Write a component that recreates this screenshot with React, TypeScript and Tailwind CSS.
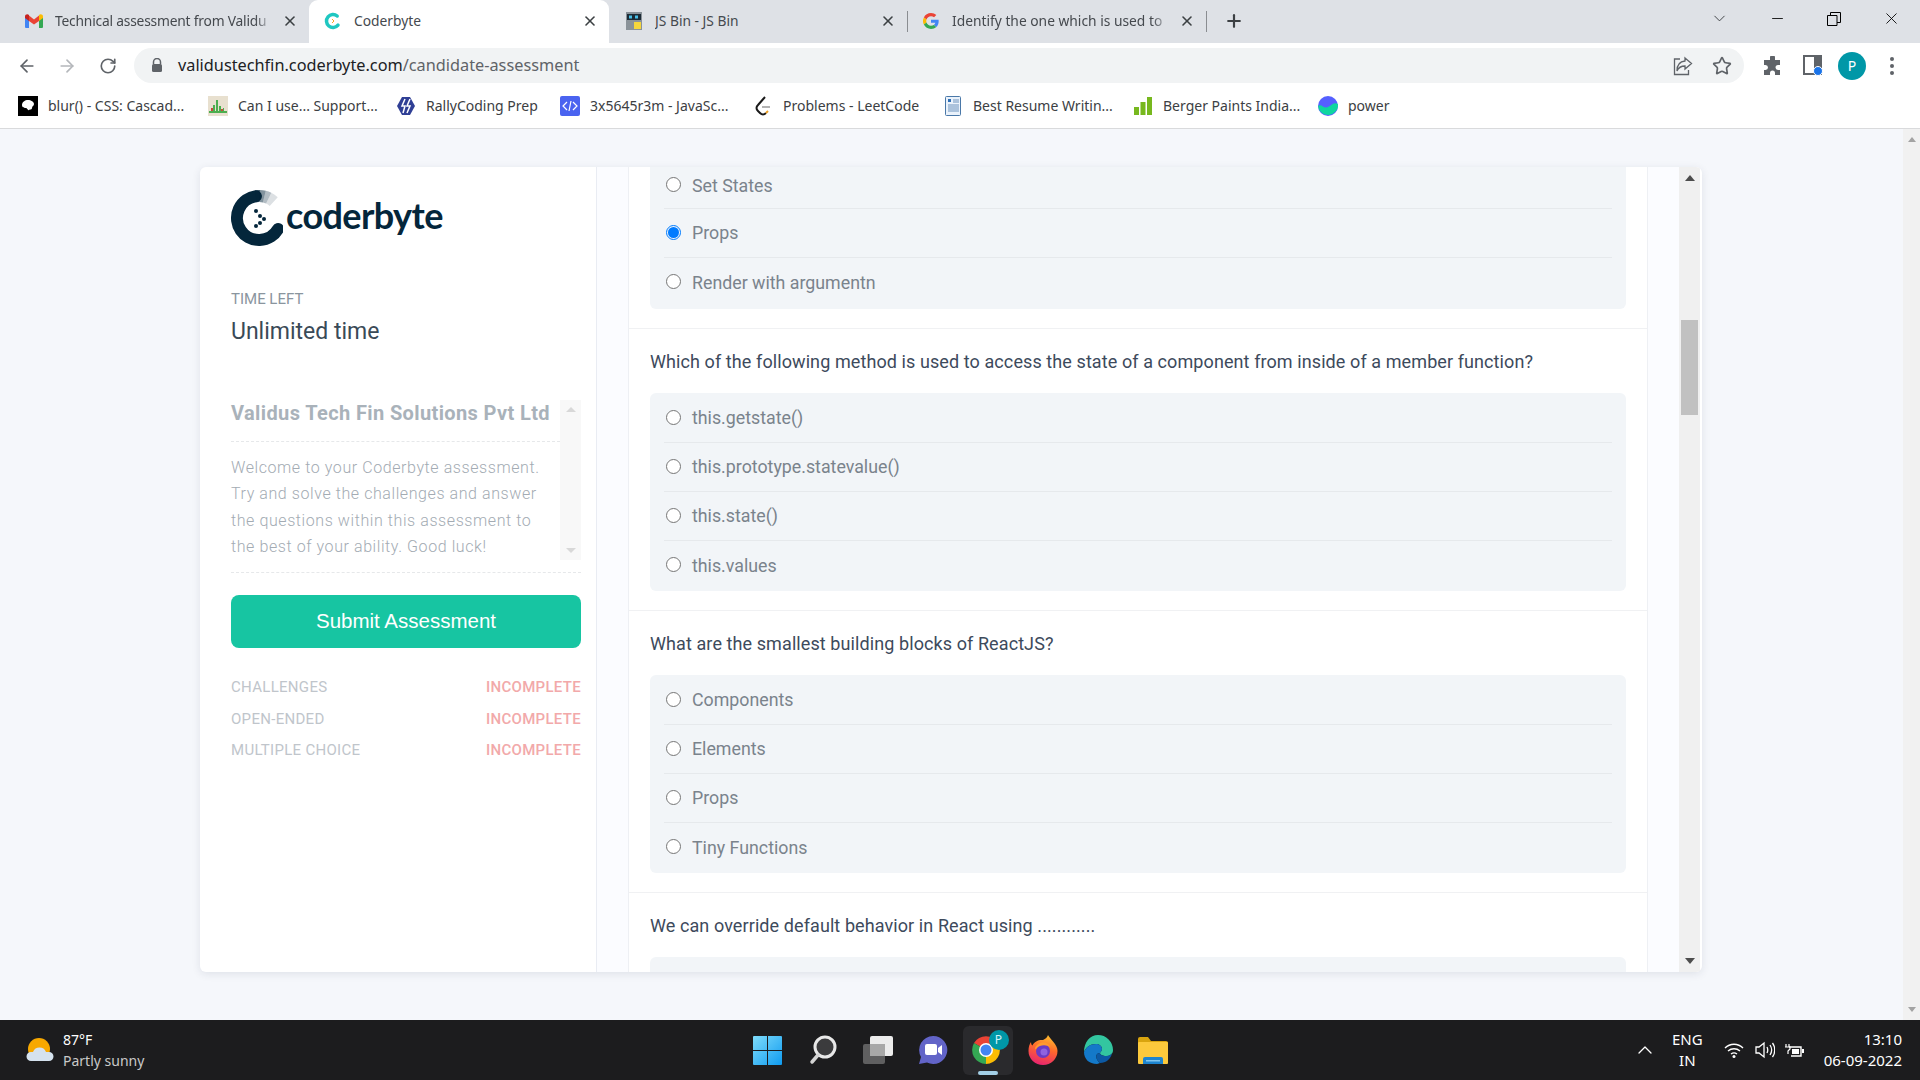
import { ArrowLeft, ArrowRight, ChevronDown, ChevronUp, Minus, Plus, RotateCw, Star, X } from "lucide-react";
import type { ReactNode } from "react";

const UI_FONT = "font-['Noto_Sans','Open_Sans',sans-serif]";

// arc path helper for the logo ring
const arc = (cx: number, cy: number, r: number, from: number, to: number) => {
  const rad = (d: number) => (d * Math.PI) / 180;
  const large = Math.abs(to - from) > 180 ? 1 : 0;
  const sweep = to > from ? 1 : 0;
  return `M${cx + r * Math.cos(rad(from))} ${cy + r * Math.sin(rad(from))}A${r} ${r} 0 ${large} ${sweep} ${cx + r * Math.cos(rad(to))} ${cy + r * Math.sin(rad(to))}`;
};

const CoderbyteMark = () => (
  <svg width="52" height="58" viewBox="0 0 52 58" className="mt-[2px] shrink-0">
    <path d={arc(28, 28, 22, 30, 262)} fill="none" stroke="#04263b" strokeWidth="12" strokeLinecap="round" />
    <path d={arc(28, 28, 22, 262, 272)} fill="none" stroke="#04263b" strokeOpacity="0.75" strokeWidth="12" />
    <path d={arc(28, 28, 22, 272, 284)} fill="none" stroke="#04263b" strokeOpacity="0.5" strokeWidth="12" />
    <path d={arc(28, 28, 22, 284, 296)} fill="none" stroke="#04263b" strokeOpacity="0.3" strokeWidth="12" />
    <path d={arc(28, 28, 22, 296, 312)} fill="none" stroke="#04263b" strokeOpacity="0.14" strokeWidth="12" />
    {[[25, 21], [29, 26], [33, 29], [29, 33], [25, 36]].map(([x, y]) => (
      <circle key={`${x}-${y}`} cx={x} cy={y} r="2" fill="#04263b" />
    ))}
  </svg>
);

const GmailIcon = () => (
  <svg width="18" height="14" viewBox="0 0 18 14">
    <path d="M0 2.5V13a1 1 0 0 0 1 1h3V6z" fill="#4285f4" />
    <path d="M18 2.5V13a1 1 0 0 1-1 1h-3V6z" fill="#34a853" />
    <path d="M4 7V1.500L9 5.500 14 1.500V7L9 10.500z" fill="#ea4335" />
    <path d="M0 2.500C0 .5 2.500-.5 4 1v6L0 4z" fill="#c5221f" />
    <path d="M18 2.500C18 .5 15.500-.5 14 1v6l4-3z" fill="#fbbc04" />
  </svg>
);

const GoogleIcon = () => (
  <svg width="16" height="16" viewBox="0 0 48 48">
    <path fill="#EA4335" d="M24 9.500c3.500 0 6.700 1.300 9.100 3.500l6.800-6.800C35.800 2.400 30.200 0 24 0 14.600 0 6.500 5.400 2.600 13.200l7.900 6.200C12.400 13.700 17.700 9.500 24 9.500z" />
    <path fill="#4285F4" d="M47 24.500c0-1.600-.1-3.100-.4-4.500H24v9h13c-.6 3-2.300 5.500-4.800 7.200l7.700 6C44.400 38 47 31.800 47 24.500z" />
    <path fill="#FBBC05" d="M10.500 28.600A14.500 14.500 0 0 1 10.500 19.400l-7.900-6.200a24 24 0 0 0 0 21.600z" />
    <path fill="#34A853" d="M24 48c6.500 0 11.900-2.100 15.900-5.800l-7.700-6c-2.100 1.400-4.900 2.300-8.200 2.300-6.300 0-11.600-4.200-13.500-9.900l-7.900 6.200C6.500 42.600 14.600 48 24 48z" />
  </svg>
);

const CoderbyteFavicon = () => (
  <svg width="18" height="18" viewBox="0 0 18 18">
    <path d={arc(9, 9, 6.500, 40, 310)} fill="none" stroke="#1fc7c1" strokeWidth="3.500" strokeLinecap="round" />
    <path d="M8 7l2 2-2 2" fill="none" stroke="#f5a623" strokeWidth="1" />
  </svg>
);

const JsBinIcon = () => (
  <svg width="16" height="18" viewBox="0 0 16 18">
    <rect x="0" y="0" width="16" height="18" fill="#8a9299" />
    <rect x="1" y="2" width="14" height="6" fill="#1d2b36" />
    <rect x="3" y="3.500" width="3" height="3" fill="#49c0e8" />
    <rect x="9" y="3.500" width="3" height="3" fill="#49c0e8" />
    <rect x="8" y="10" width="7" height="7" fill="#f5d63d" />
  </svg>
);

const bookmarkIcons: Record<string, ReactNode> = {
  blur: (
    <svg width="20" height="20" viewBox="0 0 20 20">
      <rect width="20" height="20" fill="#000" />
      <path d="M4 9c0-3 3-5 6-5s6 2 6 4-2 2-2 4-2 1-3 2-2-2-3-2-4 0-4-3z" fill="#fff" />
    </svg>
  ),
  caniuse: (
    <svg width="20" height="20" viewBox="0 0 20 20">
      <rect width="20" height="20" fill="#e8e0cf" />
      <path d="M1 15h18v2H1zM5 9h2v6H5zM8 4h2v11H8zM11 10h2v5h-2zM15 12h1v3h-1z" fill="#4cae4f" />
      <path d="M3 12h2v3H3zM13 13h2v2h-2z" fill="#c9483b" />
    </svg>
  ),
  rally: (
    <svg width="20" height="20" viewBox="0 0 20 20">
      <path d="M6 1h8l5 9-5 9H6l-5-9z" fill="#2f3f95" />
      <path d="M9 3L6 10h3l-2 7M14 3l-3 7h3l-3 7" fill="none" stroke="#fff" strokeWidth="1.500" />
    </svg>
  ),
  js: (
    <svg width="20" height="20" viewBox="0 0 20 20">
      <rect width="20" height="20" rx="2" fill="#4a63f0" />
      <path d="M7 6l-4 4 4 4M13 6l4 4-4 4M11 5l-2 10" fill="none" stroke="#fff" strokeWidth="1.200" />
    </svg>
  ),
  leet: (
    <svg width="18" height="20" viewBox="0 0 18 20">
      <path d="M11 1L4 9c-2 2-2 4 0 6l2 2c2 2 4 2 6 0" fill="none" stroke="#1a1a1a" strokeWidth="2" />
      <path d="M12 17l2-2" stroke="#f0a020" strokeWidth="2" />
      <path d="M8 11h8" stroke="#b3b3b3" strokeWidth="2" />
    </svg>
  ),
  resume: (
    <svg width="16" height="20" viewBox="0 0 16 20">
      <rect x=".5" y=".5" width="15" height="19" rx="1" fill="#eaf2fb" stroke="#4a78a8" />
      <rect x="3" y="3" width="3" height="3" fill="#2f6fb5" />
      <path d="M8 4h6M8 6h6M3 9h11M3 11h11M3 13h11M3 15h11" stroke="#6c93bd" />
    </svg>
  ),
  berger: (
    <svg width="20" height="20" viewBox="0 0 20 20">
      <rect x="1" y="11" width="5" height="8" fill="#77b81e" />
      <rect x="7.500" y="6" width="5" height="13" fill="#77b81e" />
      <rect x="14" y="1" width="5" height="18" fill="#77b81e" />
    </svg>
  ),
  power: (
    <svg width="20" height="20" viewBox="0 0 20 20">
      <circle cx="10" cy="10" r="10" fill="#5560ff" />
      <path d="M0 10c3-3 6 3 10 1s6-5 10-3a10 10 0 0 1-20 2z" fill="#0fd6a0" />
    </svg>
  ),
};

interface TabProps {
  title: string;
  icon: ReactNode;
  width: string;
  pl: string;
  active?: boolean;
  fade?: boolean;
  tight?: boolean;
}

const Tab = ({ title, icon, width, pl, active, fade, tight }: TabProps) => (
  <div className={`flex h-full shrink-0 items-center gap-[12px] pr-[11px] pb-[1px] ${width} ${pl} ${active ? "rounded-t-[9px] bg-white" : ""}`}>
    <span className="flex w-[18px] shrink-0 justify-center">{icon}</span>
    <span
      className={`min-w-0 flex-1 overflow-hidden text-[13.800px] whitespace-nowrap text-[#45494e] ${tight ? "tracking-[-0.2px]" : ""} ${fade ? "[mask-image:linear-gradient(to_right,black_92%,transparent)]" : ""}`}
    >
      {title}
    </span>
    <X size={16} strokeWidth={2.4} className="-ml-[3px] shrink-0 text-[#3c4043]" />
  </div>
);

const TabStrip = () => (
  <div className={`flex h-[43px] items-stretch bg-[#dee1e6] ${UI_FONT}`}>
    <Tab title="Technical assessment from Validu" icon={<GmailIcon />} width="w-[309px]" pl="pl-[25px]" fade tight />
    <Tab title="Coderbyte" icon={<CoderbyteFavicon />} width="w-[300px]" pl="pl-[15px]" active />
    <Tab title="JS Bin - JS Bin" icon={<JsBinIcon />} width="w-[298px]" pl="pl-[16px]" />
    <div className="my-[11px] w-px bg-[#8a8d91]" />
    <Tab title="Identify the one which is used to" icon={<GoogleIcon />} width="w-[298px]" pl="pl-[14px]" fade />
    <div className="my-[11px] w-px bg-[#8a8d91]" />
    <Plus size={20} strokeWidth={2.6} className="mt-[11px] ml-[17px] text-[#3c4043]" />
    <div className="mb-[6px] ml-auto flex items-center">
      <ChevronDown size={19} strokeWidth={1.2} className="text-[#3c4043]" />
      <Minus size={17} strokeWidth={1.2} className="ml-[40px] text-black" />
      <svg width="14" height="14" viewBox="0 0 14 14" className="ml-[41px]">
        <path d="M.5 3.500h9.500v10H.5zM3.500 3.500V.5h10v10H10" fill="none" stroke="#000" />
      </svg>
      <X size={19} strokeWidth={1.1} className="mr-[19px] ml-[41px] text-black" />
    </div>
  </div>
);

const Toolbar = () => (
  <div className={`flex h-[40px] items-center bg-white pt-[5px] ${UI_FONT}`}>
    <ArrowLeft size={20} strokeWidth={2} className="ml-[17px] text-[#5f6368]" />
    <ArrowRight size={20} strokeWidth={2} className="ml-[20px] text-[#b4b7bb]" />
    <RotateCw size={18} strokeWidth={2.2} className="ml-[22px] text-[#5f6368]" />
    <div className="ml-[17px] flex h-[35px] w-[1610px] items-center rounded-full bg-[#f1f3f4]">
      <svg width="12" height="15" viewBox="0 0 12 15" className="ml-[17px]">
        <path d="M2.500 6V4a3.500 3.500 0 0 1 7 0v2" fill="none" stroke="#5f6368" strokeWidth="1.500" />
        <rect x="1" y="6" width="10" height="8" rx="1.500" fill="#5f6368" />
      </svg>
      <span className="ml-[15px] text-[16.300px] text-[#202124]">
        validustechfin.coderbyte.com<span className="text-[#5f6368]">/candidate-assessment</span>
      </span>
      <svg width="20" height="20" viewBox="0 0 20 20" className="ml-auto">
        <path d="M7 3H1.500v15.500h14V14" fill="none" stroke="#5f6368" strokeWidth="1.300" />
        <path d="M12 2l6.500 5.500-6.500 5.500V10C8 10 5.500 11.500 4 15c0-6 3-9.500 8-10z" fill="none" stroke="#5f6368" strokeWidth="1.300" />
      </svg>
      <Star size={20} strokeWidth={2} className="mr-[12px] ml-[19px] text-[#5f6368]" />
    </div>
    <svg width="20" height="20" viewBox="0 0 20 20" className="ml-[18px]">
      <path d="M8 1.500a2.500 2.500 0 0 1 5 0V4h5v5h-2a2.500 2.500 0 0 0 0 5h2v5h-5v-2a2.500 2.500 0 0 0-5 0v2H2v-5h1.500a2.500 2.500 0 0 0 0-5H2V4h6z" fill="#5f6368" />
    </svg>
    <svg width="20" height="22" viewBox="0 0 20 22" className="ml-[21px]">
      <path d="M1 1h17v18H1z" fill="none" stroke="#5f6368" strokeWidth="2" />
      <rect x="11" y="1" width="7" height="18" fill="#5f6368" />
      <circle cx="15" cy="16" r="4.500" fill="#1a73e8" stroke="#fff" strokeWidth="1" />
    </svg>
    <div className="ml-[15px] flex h-[28px] w-[28px] items-center justify-center rounded-full bg-[#0097a7] text-[14px] text-white">P</div>
    <div className="ml-[24px] flex flex-col gap-[3px]">
      <span className="h-[4px] w-[4px] rounded-full bg-[#5f6368]" />
      <span className="h-[4px] w-[4px] rounded-full bg-[#5f6368]" />
      <span className="h-[4px] w-[4px] rounded-full bg-[#5f6368]" />
    </div>
  </div>
);

const bookmarks = [
  { label: "blur() - CSS: Cascad...", icon: "blur", width: "w-[190px]" },
  { label: "Can I use... Support...", icon: "caniuse", width: "w-[188px]" },
  { label: "RallyCoding Prep", icon: "rally", width: "w-[164px]" },
  { label: "3x5645r3m - JavaSc...", icon: "js", width: "w-[193px]" },
  { label: "Problems - LeetCode", icon: "leet", width: "w-[190px]" },
  { label: "Best Resume Writin...", icon: "resume", width: "w-[190px]" },
  { label: "Berger Paints India...", icon: "berger", width: "w-[185px]" },
  { label: "power", icon: "power", width: "w-[80px]" },
];

const BookmarksBar = () => (
  <div className={`flex h-[46px] items-center border-b border-[#d9dadc] bg-white pl-[18px] ${UI_FONT}`}>
    {bookmarks.map((b) => (
      <div key={b.label} className={`flex shrink-0 items-center gap-[10px] ${b.width}`}>
        <span className="flex w-[20px] justify-center">{bookmarkIcons[b.icon]}</span>
        <span className="text-[14px] whitespace-nowrap text-[#3c4043]">{b.label}</span>
      </div>
    ))}
  </div>
);

const Sidebar = () => (
  <aside className="flex w-[397px] shrink-0 flex-col border-r border-[#e9ecf3] pr-[15px] pl-[31px] font-['Roboto',sans-serif]">
    <div className="mt-[23px] flex h-[56px] items-center">
      <CoderbyteMark />
      <span className="-mt-[6px] ml-[3px] font-['Lato',sans-serif] text-[36px] font-bold tracking-[-0.6px] text-[#04263b]">coderbyte</span>
    </div>
    <p className="mt-[43px] text-[15px] leading-[20px] text-[#8a959e]">TIME LEFT</p>
    <p className="mt-[10px] text-[23px] leading-[26px] text-[#3a4a57]">Unlimited time</p>

    <div className="mt-[55px] flex h-[173px] flex-col border-b border-dashed border-[#e6e8ea]">
      <div className="flex h-[160px]">
        <div className="min-w-0 flex-1">
          <h2 className="flex h-[42px] items-center border-b border-dashed border-[#e6e8ea] pb-[15px] text-[20px] leading-[26px] font-bold tracking-[0.38px] whitespace-nowrap text-[#a9b2ba]">
            Validus Tech Fin Solutions Pvt Ltd
          </h2>
          <p className="mt-[13px] pr-[12px] text-[16px] leading-[26.300px] font-light tracking-[0.58px] text-[#a3abb3]">
            Welcome to your Coderbyte assessment. Try and solve the challenges and answer the questions within this
            assessment to the best of your ability. Good luck!
          </p>
        </div>
        <div className="flex w-[21px] shrink-0 flex-col items-center justify-between bg-[#f8f8f8] py-[7px]">
          <span className="h-0 w-0 border-x-[5px] border-b-[5px] border-x-transparent border-b-[#d8d8d8]" />
          <span className="h-0 w-0 border-x-[5px] border-t-[5px] border-x-transparent border-t-[#d8d8d8]" />
        </div>
      </div>
    </div>

    <button className="mt-[22px] h-[53px] w-full rounded-[8px] bg-[#17c5a2] font-['Liberation_Sans',sans-serif] text-[20.500px] text-white">
      Submit Assessment
    </button>

    <div className="mt-[29px] flex flex-col gap-[11.500px] text-[15px] leading-[20px] tracking-[0.3px]">
      {["CHALLENGES", "OPEN-ENDED", "MULTIPLE CHOICE"].map((label) => (
        <div key={label} className="flex justify-between">
          <span className="text-[#c0c5cb]">{label}</span>
          <span className="font-medium text-[#f2a9aa]">INCOMPLETE</span>
        </div>
      ))}
    </div>
  </aside>
);

const Radio = ({ checked }: { checked?: boolean }) =>
  checked ? (
    <span className="flex h-[15px] w-[15px] shrink-0 items-center justify-center rounded-full border border-[#007bff]">
      <span className="h-[11px] w-[11px] rounded-full bg-[#007bff]" />
    </span>
  ) : (
    <span className="h-[15px] w-[15px] shrink-0 rounded-full border-[1.500px] border-[#767676] bg-white" />
  );

const OptionsPanel = ({ options, selected, clippedTop }: { options: string[]; selected?: number; clippedTop?: boolean }) => (
  <div className={`rounded-b-[6px] bg-[#f2f5f8] px-[14px] ${clippedTop ? "pb-[2px]" : "rounded-t-[6px] py-[1px]"}`}>
    {options.map((o, i) => (
      <div
        key={i}
        className={`flex items-center gap-[11px] pl-[2px] ${i < options.length - 1 ? "border-b border-[#e6e9ec]" : ""} ${clippedTop && i === 0 ? "h-[42px] pb-[4px]" : "h-[49px]"}`}
      >
        <span className="-mt-[2px] flex"><Radio checked={i === selected} /></span>
        <span className="pt-[1px] text-[17.800px] text-[#7a838c]">{o}</span>
      </div>
    ))}
  </div>
);

const Question = ({ text, children }: { text?: string; children: ReactNode }) => (
  <section className="border-b border-[#f0f1f3] px-[21px] pb-[19px]">
    {text && <p className="flex h-[64px] items-center font-['Roboto',sans-serif] text-[18px] tracking-[0.09px] text-[#3d4a5c]">{text}</p>}
    {children}
  </section>
);

const Questions = () => (
  <div className="w-[1018px] shrink-0 overflow-hidden font-['Roboto',sans-serif]">
    <Question>
      <OptionsPanel clippedTop options={["Set States", "Props", "Render with argumentn"]} selected={1} />
    </Question>
    <Question text="Which of the following method is used to access the state of a component from inside of a member function?">
      <OptionsPanel options={["this.getstate()", "this.prototype.statevalue()", "this.state()", "this.values"]} />
    </Question>
    <Question text="What are the smallest building blocks of ReactJS?">
      <OptionsPanel options={["Components", "Elements", "Props", "Tiny Functions"]} />
    </Question>
    <Question text="We can override default behavior in React using ............">
      <OptionsPanel options={["", ""]} />
    </Question>
  </div>
);

const CardScrollbar = () => (
  <div className="flex w-[21px] shrink-0 flex-col bg-[#f0f0f0]">
    <div className="flex h-[14px] items-end justify-center">
      <span className="h-0 w-0 border-x-[5px] border-b-[6px] border-x-transparent border-b-[#4d4d4d]" />
    </div>
    <div className="mx-[2px] mt-[139px] h-[95px] bg-[#c1c1c1]" />
    <div className="mt-auto mb-[8px] flex justify-center">
      <span className="h-0 w-0 border-x-[5px] border-t-[6px] border-x-transparent border-t-[#4d4d4d]" />
    </div>
  </div>
);

const Card = () => (
  <div className="mt-[38px] ml-[200px] flex h-[805px] w-[1502px] overflow-hidden rounded-[6px] bg-white shadow-[0_2px_8px_rgba(30,40,70,0.1)]">
    <Sidebar />
    <div className="w-[32px] shrink-0 border-r border-[#eef0f4] bg-[#fbfcff]" />
    <Questions />
    <div className="w-[32px] shrink-0 border-l border-[#eef0f4] bg-[#fbfcff]" />
    <CardScrollbar />
  </div>
);

const WindowsLogo = () => (
  <svg width="29" height="29" viewBox="0 0 29 29">
    <defs>
      <linearGradient id="win" x1="0" y1="0" x2="1" y2="1">
        <stop offset="0" stopColor="#7fdcfb" />
        <stop offset="1" stopColor="#0f9bf0" />
      </linearGradient>
    </defs>
    <path d="M0 1a1 1 0 0 1 1-1h13v14H0zM15 0h13a1 1 0 0 1 1 1v13H15zM0 15h14v14H1a1 1 0 0 1-1-1zM15 15h14v13a1 1 0 0 1-1 1H15z" fill="url(#win)" />
  </svg>
);

const SearchIcon = () => (
  <svg width="28" height="30" viewBox="0 0 28 30">
    <circle cx="16" cy="12" r="10" fill="#3b3b3d" stroke="#e8e8e8" strokeWidth="3" />
    <path d="M9 20l-6 7" stroke="#d4d4d4" strokeWidth="3.500" strokeLinecap="round" />
  </svg>
);

const TaskViewIcon = () => (
  <svg width="30" height="28" viewBox="0 0 30 28">
    <rect x="0" y="8" width="22" height="20" rx="2" fill="#5f5f60" />
    <rect x="7" y="0" width="23" height="20" rx="2" fill="#ececec" />
    <rect x="7" y="8" width="15" height="12" fill="#a8a8a8" />
  </svg>
);

const ChatIcon = () => (
  <svg width="30" height="30" viewBox="0 0 30 30">
    <path d="M15 1a14 14 0 1 1-6 26.500L1 29l2-7A14 14 0 0 1 15 1z" fill="#6264c8" />
    <rect x="7" y="9" width="12" height="11" rx="2" fill="#fff" />
    <path d="M20 13l4-3v10l-4-3z" fill="#fff" />
  </svg>
);

const ChromeIcon = () => (
  <span className="relative flex h-[49px] w-[50px] items-center justify-center rounded-[6px] bg-[#2a2a2d]">
    <svg width="28" height="28" viewBox="0 0 28 28" className="-mt-[1px] -ml-[3px]">
      <path d="M14 14L2 7A14 14 0 0 1 26 7z" fill="#ea4335" />
      <path d="M14 14L26 7a14 14 0 0 1-12 21z" fill="#fbbc04" />
      <path d="M14 14l0 14A14 14 0 0 1 2 7z" fill="#34a853" />
      <circle cx="14" cy="14" r="7" fill="#fff" />
      <circle cx="14" cy="14" r="5.500" fill="#4285f4" />
    </svg>
    <span className="absolute top-[4px] right-[4px] flex h-[20px] w-[20px] items-center justify-center rounded-full bg-[#0097a7] text-[12px] text-[#d5f3f7]">P</span>
    <span className="absolute bottom-0 left-[15px] h-[4px] w-[20px] rounded-full bg-[#a3cfe6]" />
  </span>
);

const FirefoxIcon = () => (
  <svg width="30" height="30" viewBox="0 0 30 30">
    <defs>
      <linearGradient id="fx" x1="0.7" y1="0" x2="0.4" y2="1">
        <stop offset="0" stopColor="#ffc12e" />
        <stop offset="0.45" stopColor="#ff6a2b" />
        <stop offset="1" stopColor="#e8246f" />
      </linearGradient>
    </defs>
    <path d="M20 0c1 2 3 4 5 6.500 3 3.500 4.500 6.500 4.500 9.500a14.500 14 0 0 1-29 0C.5 12 1.500 9 3 7c0 1.500.5 3 1.500 3.500C6 6.500 11 4.500 15 5c2.500-1 4.500-3 5-5z" fill="url(#fx)" />
    <circle cx="15" cy="16" r="7" fill="#6a3bc4" />
    <circle cx="16" cy="17" r="3.500" fill="#8f63e0" />
    <path d="M7 13c2-5 9-7 13-4 1 .8 2 2 2.500 3.500C19 9.500 12 9.500 8.500 13.500c-.5 1-1 1.500-1.500-.5z" fill="#ff9a2e" />
  </svg>
);

const EdgeIcon = () => (
  <svg width="30" height="30" viewBox="0 0 30 30">
    <path d="M15 0a15 15 0 0 1 15 15c0 4-3 6-7 6-3 0-6-1-6-3 0-1 2-2 2-4 0-3-3-5-6-5C7 9 3 12 1 17 1 7 7 0 15 0z" fill="#33c6a0" />
    <path d="M1 17C3 12 7 9 13 9c3 0 6 2 6 5 0 2-2 3-2 4-5 0-5 6 0 10a15 15 0 0 1-3 1C6 29 1 24 1 17z" fill="#1479c9" />
    <path d="M17 18c0 2 3 3 6 3 3 0 5-1 6-3-1 6-6 10-12 10-5-4-5-10 0-10z" fill="#0c59a4" />
  </svg>
);

const FolderIcon = () => (
  <svg width="30" height="27" viewBox="0 0 30 27">
    <path d="M0 2a2 2 0 0 1 2-2h8l3 4h15a2 2 0 0 1 2 2v4H0z" fill="#d9a40f" />
    <rect x="0" y="5" width="30" height="22" rx="1" fill="#fcc93c" />
    <path d="M5 27v-5a2 2 0 0 1 2-2h16a2 2 0 0 1 2 2v5z" fill="#1d84cf" />
    <rect x="8" y="23" width="14" height="1.500" fill="#7ec4ef" />
  </svg>
);

const Taskbar = () => (
  <div className={`flex h-[60px] items-center bg-[#1c1c1e] ${UI_FONT}`}>
    <div className="flex w-[740px] shrink-0 items-center pl-[26px]">
      <svg width="28" height="26" viewBox="0 0 28 26">
        <circle cx="13" cy="12" r="11" fill="#f7a800" />
        <path d="M5 24a4.500 4.500 0 0 1 0-9h2a7 7 0 0 1 13 0h3a4.500 4.500 0 0 1 0 9z" fill="#d5e2ee" />
      </svg>
      <div className="ml-[9px] flex flex-col text-[14px] leading-[21px]">
        <span className="text-white">87°F</span>
        <span className="text-[#c9c9c9]">Partly sunny</span>
      </div>
    </div>
    <div className="flex items-center">
      {[<WindowsLogo />, <SearchIcon />, <TaskViewIcon />, <ChatIcon />, <ChromeIcon />, <FirefoxIcon />, <EdgeIcon />, <FolderIcon />].map((icon, i) => (
        <span key={i} className="flex w-[55px] justify-center">{icon}</span>
      ))}
    </div>
    <div className="ml-auto flex items-center pr-[18px] text-white">
      <ChevronUp size={24} strokeWidth={1.3} className="mr-[15px]" />
      <div className="flex flex-col items-center text-[15px] leading-[21px]">
        <span>ENG</span>
        <span>IN</span>
      </div>
      <svg width="20" height="16" viewBox="0 0 20 16" className="ml-[21px]">
        <path d="M1 6c5-5 13-5 18 0M4 9c3.500-3 8.500-3 12 0M7 12c2-1.500 4-1.500 6 0" fill="none" stroke="#fff" strokeWidth="1.400" />
        <circle cx="10" cy="14.500" r="1.500" fill="#fff" />
      </svg>
      <svg width="20" height="18" viewBox="0 0 20 18" className="ml-[11px]">
        <path d="M1 6h3l5-4v14l-5-4H1z" fill="none" stroke="#fff" strokeWidth="1.300" />
        <path d="M12 6c1 2 1 4 0 6M15 4c2 3 2 7 0 10M17.500 2c3 4 3 10 0 14" fill="none" stroke="#fff" strokeWidth="1.300" />
      </svg>
      <svg width="20" height="16" viewBox="0 0 20 16" className="ml-[10px]">
        <path d="M4 5h12v9H6" fill="none" stroke="#fff" strokeWidth="1.400" />
        <rect x="7" y="7" width="7" height="5" fill="#fff" />
        <rect x="17" y="7" width="2" height="4" fill="#fff" />
        <path d="M1 2v3M4 2v3M0 5h5v2l-2 2v3" fill="none" stroke="#fff" strokeWidth="1.200" />
      </svg>
      <div className="ml-[19px] flex flex-col items-end text-[15px] leading-[21px]">
        <span>13:10</span>
        <span>06-09-2022</span>
      </div>
    </div>
  </div>
);

export default function App() {
  return (
    <div className="flex h-screen w-full flex-col overflow-hidden bg-[#f5f7fb]">
      <TabStrip />
      <Toolbar />
      <BookmarksBar />
      <div className="flex min-h-0 flex-1">
        <main className="min-w-0 flex-1">
          <Card />
        </main>
        <div className="flex w-[17px] shrink-0 flex-col items-center justify-between bg-[#f1f1f1] py-[8px]">
          <span className="h-0 w-0 border-x-[4px] border-b-[5px] border-x-transparent border-b-[#a3a3a3]" />
          <span className="h-0 w-0 border-x-[4px] border-t-[5px] border-x-transparent border-t-[#a3a3a3]" />
        </div>
      </div>
      <Taskbar />
    </div>
  );
}
